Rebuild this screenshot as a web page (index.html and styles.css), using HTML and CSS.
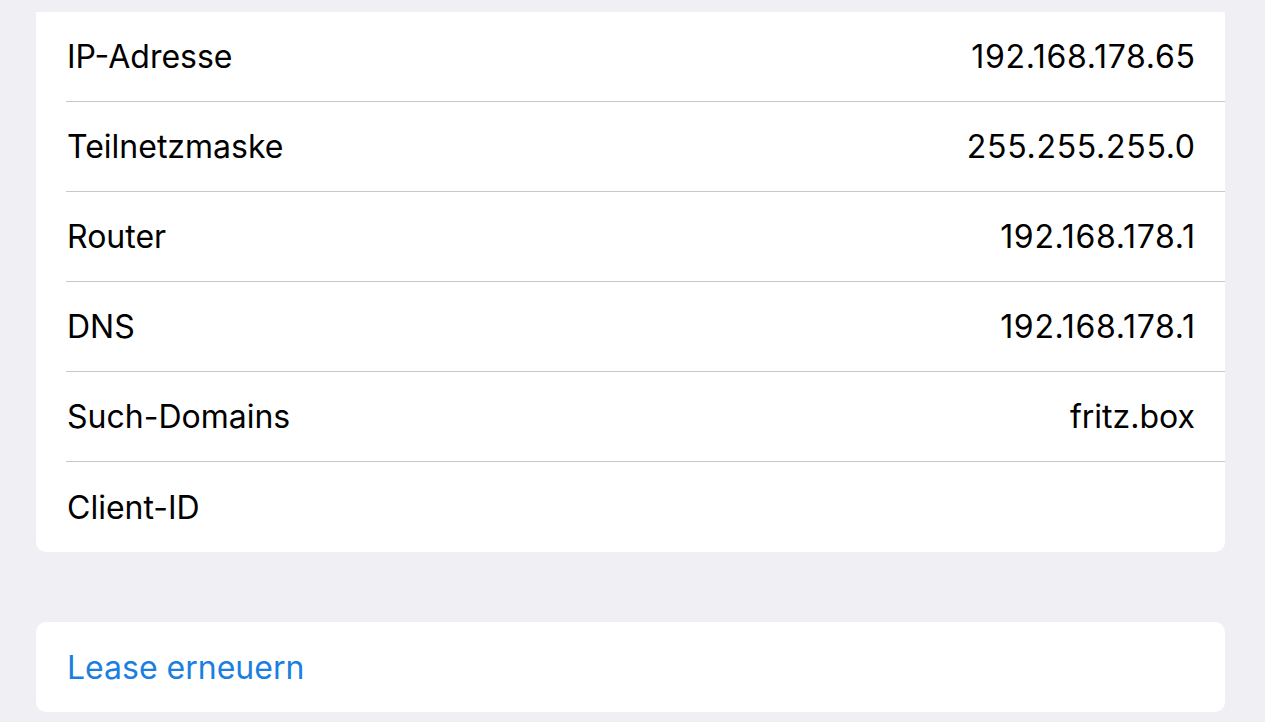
FILE: index.html
```html
<!DOCTYPE html>
<html lang="de">
<head>
<meta charset="utf-8">
<title>DHCP</title>
<link rel="stylesheet" href="styles.css">
</head>
<body>
<main class="page">
  <section class="group group-top">
    <div class="row"><span class="label">IP-Adresse</span><span class="value num">192.168.178.65</span></div>
    <div class="row"><span class="label">Teilnetzmaske</span><span class="value num">255.255.255.0</span></div>
    <div class="row"><span class="label">Router</span><span class="value num">192.168.178.1</span></div>
    <div class="row"><span class="label">DNS</span><span class="value num">192.168.178.1</span></div>
    <div class="row"><span class="label">Such-Domains</span><span class="value">fritz.box</span></div>
    <div class="row row-last"><span class="label">Client-ID</span><span class="value"></span></div>
  </section>
  <section class="group group-action">
    <div class="row row-last"><span class="label action">Lease erneuern</span></div>
  </section>
</main>
</body>
</html>
```
FILE: styles.css
```css
html, body {
  margin: 0;
  padding: 0;
  background: #efeff4;
}
body {
  font-family: Inter, "Liberation Sans", Arial, sans-serif;
  color: #000;
  -webkit-font-smoothing: antialiased;
}
.page {
  padding: 12px 40px 10px 36px;
  display: flex;
  flex-direction: column;
  gap: 70px;
}
.group {
  background: #fff;
  border-radius: 10px;
  overflow: hidden;
}
.group-top {
  border-radius: 0 0 10px 10px;
}
.row {
  height: 90px;
  box-sizing: border-box;
  margin-left: 30px;
  padding-left: 1px;
  padding-right: 30px;
  display: flex;
  align-items: center;
  justify-content: space-between;
  border-bottom: 1px solid #c8c7cc;
  font-size: 32px;
}
.row-last {
  border-bottom: none;
}
.value {
  color: #000;
}
.num {
  letter-spacing: 0.7px;
  margin-right: -0.7px;
}
.action {
  color: #1a7fe0;
}
```
